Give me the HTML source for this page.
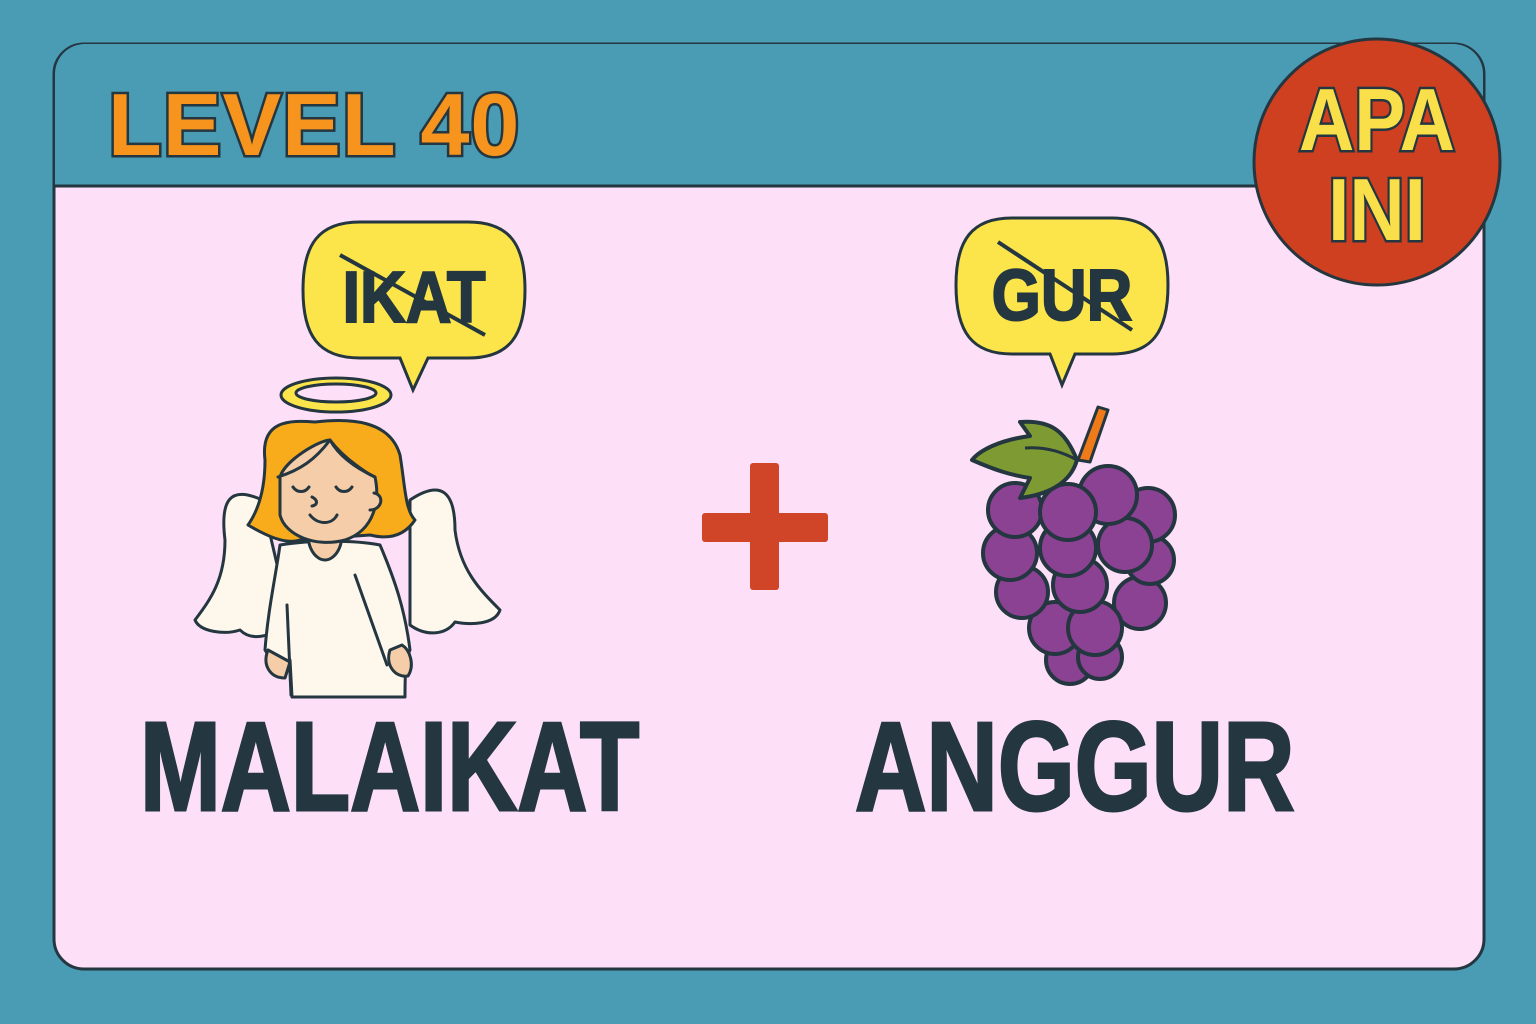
<!DOCTYPE html>
<html><head><meta charset="utf-8"><style>
body{margin:0;width:1536px;height:1024px;background:#4a9bb4;overflow:hidden;font-family:"Liberation Sans",sans-serif;}
svg{position:absolute;left:0;top:0}
</style></head><body>
<svg width="1536" height="1024" viewBox="0 0 1536 1024" font-family="Liberation Sans, sans-serif" font-weight="bold">
<rect x="0" y="0" width="1536" height="1024" fill="#4a9bb4"/>
<rect x="54" y="44" width="1430" height="925" rx="30" fill="#fde0f7" stroke="#243640" stroke-width="3"/>
<path d="M55 186 V74 a30 30 0 0 1 30 -30 H1453 a30 30 0 0 1 30 30 V186 Z" fill="#4a9bb4"/>
<line x1="54" y1="186" x2="1484" y2="186" stroke="#243640" stroke-width="3"/>
<text x="108" y="155" font-size="88" fill="#f7941d" stroke="#243640" stroke-width="5" paint-order="stroke" letter-spacing="1">LEVEL 40</text>
<circle cx="1377" cy="162" r="123" fill="#cf4020" stroke="#243640" stroke-width="3"/>
<g fill="#f9e04a" stroke="#243640" stroke-width="5" paint-order="stroke" font-size="88" text-anchor="middle">
<text x="1377" y="150" transform="translate(1377 0) scale(0.87 1) translate(-1377 0)">APA</text>
<text x="1377" y="240" transform="translate(1377 0) scale(0.87 1) translate(-1377 0)">INI</text>
</g>
<g fill="#fbe54a" stroke="#243640" stroke-width="3">
<path d="M360 222 H468 C510 222 525 245 525 290 C525 335 510 358 468 358 H428 L413 390 L400 358 H360 C318 358 303 335 303 290 C303 245 318 222 360 222 Z"/>
<path d="M1012 218 H1112 C1152 218 1168 240 1168 285 C1168 332 1152 354 1112 354 H1075 L1062 385 L1050 354 H1012 C972 354 956 332 956 285 C956 240 972 218 1012 218 Z"/>
</g>
<g fill="#243640" stroke="#243640" stroke-width="2" font-size="72" text-anchor="middle">
<text x="414" y="322" transform="translate(414 0) scale(0.88 1) translate(-414 0)">IKAT</text>
<text x="1062" y="320" transform="translate(1062 0) scale(0.88 1) translate(-1062 0)">GUR</text>
</g>
<line x1="340" y1="255" x2="485" y2="335" stroke="#243640" stroke-width="4"/>
<line x1="998" y1="242" x2="1132" y2="330" stroke="#243640" stroke-width="4"/>
<rect x="750" y="463" width="29" height="127" rx="3" fill="#d04428"/>
<rect x="702" y="513" width="126" height="29" rx="3" fill="#d04428"/>
<g stroke="#243640" stroke-width="3" stroke-linejoin="round" stroke-linecap="round">
<ellipse cx="336" cy="395" rx="55" ry="17" fill="#fbe54a"/>
<ellipse cx="336" cy="393" rx="40" ry="9" fill="#fde0f7"/>
<path d="M262 500 C230 485 220 500 225 540 C225 580 210 600 195 620 C200 632 225 635 240 630 C250 640 270 640 290 620 Z" fill="#fdf7ec"/>
<path d="M410 500 C440 480 455 490 455 530 C460 570 480 590 500 610 C495 625 470 625 455 622 C445 636 425 636 410 625 Z" fill="#fdf7ec"/>
<path d="M280 545 C275 580 268 610 265 650 C270 660 285 665 290 660 L292 697 L405 697 C405 680 405 660 410 650 C405 610 395 580 380 545 C355 540 310 540 280 545 Z" fill="#fdf7ec"/>
<path d="M268 650 C262 665 270 678 285 678 L290 662 Z" fill="#f5cda8"/>
<path d="M390 650 C385 665 395 678 408 676 C415 665 410 650 402 645 Z" fill="#f5cda8"/>
<path d="M310 530 C305 545 315 560 325 560 C335 560 345 545 340 530 Z" fill="#f5cda8"/>
<path d="M265 460 C260 420 290 420 315 422 C350 418 390 420 400 455 C405 485 405 510 415 520 C405 535 390 540 370 535 L300 540 C285 545 265 535 248 525 C262 505 265 480 265 460 Z" fill="#f8ab1b"/>
<path d="M280 477 C285 460 320 440 330 440 C345 460 370 475 375 477 C380 500 375 530 345 540 C315 548 285 535 280 515 Z" fill="#f5cda8"/>
<path d="M374 493 C385 495 382 510 370 510" fill="#f5cda8"/>
<path d="M293 487 C297 493 305 493 309 487 M336 487 C340 493 348 493 352 487 M312 497 C318 500 318 505 312 506 M310 515 C318 525 332 525 337 515" fill="none"/>
<path d="M278 477 C300 470 315 460 330 440 C340 458 360 470 375 477" fill="none"/>
<path d="M287 605 L291 695 M355 575 L387 665" fill="none"/>
</g>
<g stroke="#243640" stroke-width="4" fill="#8c4293">
<circle cx="1070" cy="660" r="24"/><circle cx="1100" cy="657" r="22"/>
<circle cx="1055" cy="628" r="26"/><circle cx="1140" cy="603" r="26"/>
<circle cx="1022" cy="592" r="26"/><circle cx="1095" cy="628" r="27"/>
<circle cx="1150" cy="560" r="24"/><circle cx="1010" cy="553" r="27"/>
<circle cx="1148" cy="515" r="27"/><circle cx="1080" cy="585" r="27"/>
<circle cx="1125" cy="545" r="27"/><circle cx="1068" cy="548" r="28"/>
<circle cx="1015" cy="510" r="27"/><circle cx="1108" cy="495" r="29"/>
<circle cx="1068" cy="512" r="28"/>
</g>
<path d="M1078 460 L1098 407 L1108 410 L1090 462 Z" fill="#ef7a1a" stroke="#243640" stroke-width="3" stroke-linejoin="round"/>
<path d="M1077 460 C1065 430 1050 420 1020 422 L1030 436 C1000 440 980 450 972 460 C995 470 1010 475 1030 478 L1020 498 C1045 495 1070 485 1077 460 Z" fill="#7e9a33" stroke="#243640" stroke-width="4" stroke-linejoin="round"/>
<path d="M1025 448 C1050 446 1068 455 1077 460" fill="none" stroke="#243640" stroke-width="3"/>
<g fill="#243640" stroke="#243640" stroke-width="3" font-size="126">
<text x="140" y="810" transform="translate(140 0) scale(0.77 1) translate(-140 0)">MALAIKAT</text>
<text x="855" y="810" transform="translate(855 0) scale(0.785 1) translate(-855 0)">ANGGUR</text>
</g>
</svg>
</body></html>
